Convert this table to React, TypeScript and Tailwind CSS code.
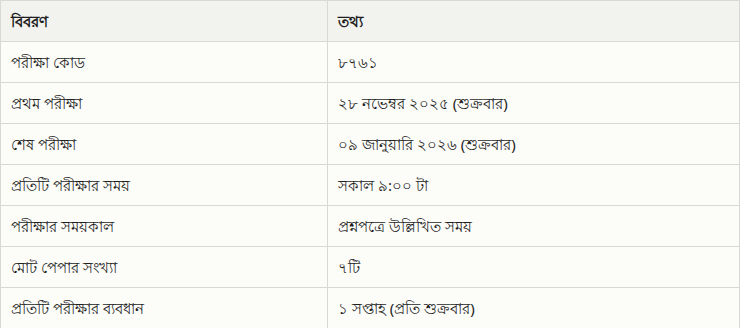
import React from "react";

const rows: [string, string][] = [
  ["পরীক্ষা কোড", "৮৭৬১"],
  ["প্রথম পরীক্ষা", "২৮ নভেম্বর ২০২৫ (শুক্রবার)"],
  ["শেষ পরীক্ষা", "০৯ জানুয়ারি ২০২৬ (শুক্রবার)"],
  ["প্রতিটি পরীক্ষার সময়", "সকাল ৯:০০ টা"],
  ["পরীক্ষার সময়কাল", "প্রশ্নপত্রে উল্লিখিত সময়"],
  ["মোট পেপার সংখ্যা", "৭টি"],
  ["প্রতিটি পরীক্ষার ব্যবধান", "১ সপ্তাহ (প্রতি শুক্রবার)"],
];

export default function App() {
  return (
    <div
      className="w-[742px] h-[328px] overflow-hidden bg-white"
      style={{ fontFamily: '"Noto Sans", sans-serif' }}
    >
      <table className="w-[740px] border-collapse table-fixed text-[15px] text-[#1f1f1f]">
        <colgroup>
          <col className="w-[327px]" />
          <col />
        </colgroup>
        <thead>
          <tr className="bg-[#f2f2ef] h-[41px]">
            <th className="border border-[#d8d8d6] px-[10px] text-left font-bold align-middle">বিবরণ</th>
            <th className="border border-[#d8d8d6] px-[10px] text-left font-bold align-middle">তথ্য</th>
          </tr>
        </thead>
        <tbody>
          {rows.map(([a, b]) => (
            <tr key={a} className="bg-[#fcfcf9] h-[41px]">
              <td className="border border-[#d8d8d6] px-[10px] align-middle">{a}</td>
              <td className="border border-[#d8d8d6] px-[10px] align-middle">{b}</td>
            </tr>
          ))}
        </tbody>
      </table>
    </div>
  );
}
